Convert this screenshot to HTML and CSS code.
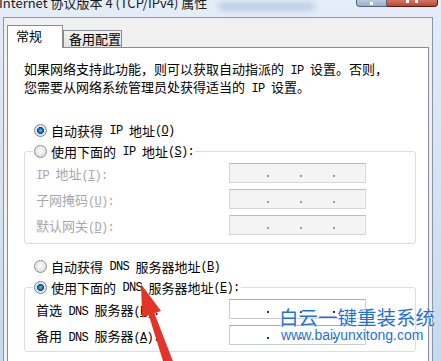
FILE: index.html
```html
<!DOCTYPE html>
<html lang="zh-CN">
<head>
  <meta charset="UTF-8">
  <title>Internet 协议版本 4 (TCP/IPv4) 属性</title>
  <link rel="stylesheet" href="styles.css">
</head>
<body>
<div class="window">
  <div class="titlebar">
    <span class="title">Internet 协议版本 4 (TCP/IPv4) 属性</span>
    <span class="title-blur"></span>
    <div class="caption">
      <span class="btn-help"></span>
      <span class="btn-close"></span>
    </div>
  </div>

  <div class="client">
    <div class="tabs">
      <div class="tab active">常规</div>
      <div class="tab">备用配置</div>
    </div>

    <div class="panel">
      <p class="intro">如果网络支持此功能，则可以获取自动指派的<span class="en"> IP </span>设置。否则，<br>您需要从网络系统管理员处获得适当的<span class="en"> IP </span>设置。</p>

      <label class="opt first">
        <span class="radio checked"></span>自动获得<span class="en"> IP </span>地址<span class="en">(<u>O</u>)</span>
      </label>
      <fieldset class="group">
        <legend class="opt"><span class="radio"></span>使用下面的<span class="en"> IP </span>地址<span class="en">(<u>S</u>):</span></legend>
        <div class="row off">
          <span class="lbl"><span class="en">IP </span>地址<span class="en">(<u>I</u>):</span></span>
          <span class="field"><i></i><i></i><i></i></span>
        </div>
        <div class="row off">
          <span class="lbl">子网掩码<span class="en">(<u>U</u>):</span></span>
          <span class="field"><i></i><i></i><i></i></span>
        </div>
        <div class="row off">
          <span class="lbl">默认网关<span class="en">(<u>D</u>):</span></span>
          <span class="field"><i></i><i></i><i></i></span>
        </div>
      </fieldset>

      <label class="opt dns">
        <span class="radio"></span>自动获得<span class="en"> DNS </span>服务器地址<span class="en">(<u>B</u>)</span>
      </label>
      <fieldset class="group dns-group">
        <legend class="opt"><span class="radio checked"></span>使用下面的<span class="en"> DNS </span>服务器地址<span class="en">(<u>E</u>):</span></legend>
        <div class="row">
          <span class="lbl">首选<span class="en"> DNS </span>服务器<span class="en">(<u>P</u>):</span></span>
          <span class="field"><i></i><i></i><i></i></span>
        </div>
        <div class="row">
          <span class="lbl">备用<span class="en"> DNS </span>服务器<span class="en">(<u>A</u>):</span></span>
          <span class="field"><i></i><i></i><i></i></span>
        </div>
      </fieldset>
    </div>
  </div>
</div>

<div class="watermark">
  <div class="wm-name">白云一键重装系统</div>
  <div class="wm-url">www.baiyunxitong.com</div>
</div>

<svg class="arrow" width="441" height="361" viewBox="0 0 441 361">
  <polygon points="141,284 161,311 154.4,313.2 175.7,368.3 166.3,371.7 148.8,315.2 142.2,317.5" fill="#e3342a"/>
</svg>
</body>
</html>
```

FILE: styles.css
```css
body {
  margin: 0;
  width: 441px;
  height: 361px;
  overflow: hidden;
  position: relative;
  background: linear-gradient(#e4edf8, #c7d9ee);
  font-family: "Noto Sans CJK SC", sans-serif;
  font-size: 13px;
  color: #000;
}
.en {
  font-family: "Liberation Mono", monospace;
  font-size: 12px;
  letter-spacing: -0.7px;
  white-space: pre;
}
.window {
  display: flex;
  flex-direction: column;
  height: 100%;
}

/* title bar */
.titlebar {
  height: 17px;
  flex-shrink: 0;
  display: flex;
  align-items: flex-start;
}
.title {
  margin: -5px 0 0 -1px;
  line-height: 16px;
  white-space: nowrap;
  color: #1b1b1b;
}
.title-blur {
  width: 95px;
  height: 7px;
  margin: 3px 0 0 12px;
  background: #a8c0de;
  filter: blur(3px);
  opacity: .8;
}
.caption {
  margin-left: auto;
  margin-right: 3px;
  display: flex;
}
.btn-help, .btn-close {
  height: 7px;
  box-sizing: border-box;
  border: 1px solid #56657a;
  border-top: none;
  position: relative;
}
.btn-help {
  width: 31px;
  border-radius: 0 0 0 4px;
  background: linear-gradient(#b9c9dd, #9bb0c9);
}
.btn-close {
  width: 51px;
  border-color: #4e1f17;
  border-left: none;
  border-radius: 0 0 4px 0;
  background: linear-gradient(#d47563, #c2432f);
}
.btn-help::after {
  content: "";
  position: absolute;
  left: 13px;
  top: 2px;
  width: 3px;
  height: 3px;
  background: #fff;
}
.btn-close::after {
  content: "";
  position: absolute;
  left: 19px;
  top: 0;
  width: 12px;
  height: 3px;
  border-left: 3px solid #fff;
  border-right: 3px solid #fff;
  box-sizing: border-box;
}

/* dialog client area */
.client {
  flex: 1;
  min-height: 0;
  margin: 0 8px 0 3px;
  border: 1px solid #8796a9;
  border-bottom: none;
  background: #f0f0f0;
  padding: 7px 3px 0;
  display: flex;
  flex-direction: column;
}
.tabs {
  display: flex;
  align-items: flex-end;
  height: 22px;
  position: relative;
  z-index: 1;
}
.tab {
  width: 59px;
  height: 17px;
  box-sizing: border-box;
  border: 1px solid #898c95;
  border-bottom: none;
  background: linear-gradient(#f4f4f4, #e2e2e2);
  padding-left: 5px;
  line-height: 15px;
  white-space: nowrap;
}
.tab.active {
  width: 56px;
  height: 23px;
  margin-bottom: -1px;
  background: #fff;
  padding: 2px 0 0 8px;
  line-height: 16px;
}
.panel {
  flex: 1;
  background: #fff;
  border: 1px solid #898c95;
  border-bottom: none;
  padding: 13px 12px 0 16px;
}
.intro {
  margin: 0;
  height: 30px;
  line-height: 15px;
  white-space: nowrap;
}

/* radio options and group boxes */
.opt {
  display: flex;
  align-items: center;
  height: 21px;
  white-space: nowrap;
}
.opt.first {
  margin: 29px 0 0 10px;
}
.opt.dns {
  margin: 12px 0 0 10px;
}
.radio {
  width: 13px;
  height: 13px;
  box-sizing: border-box;
  border-radius: 50%;
  border: 1px solid #8f8f8f;
  background: radial-gradient(circle at 50% 40%, #fdfdfd 0, #e6e6e6 55%, #cfcfcf 100%);
  margin-right: 4px;
  flex-shrink: 0;
}
.radio.checked {
  border-color: #7d8590;
  background: radial-gradient(circle at 50% 50%, #5cc0f4 0, #1f79c3 25%, #0d3f70 42%, #e8e8e8 48%, #dcdcdc 100%);
}
.group {
  margin: 0;
  min-width: 0;
  border: 1px solid #d5dfe5;
  border-radius: 3px;
  padding: 0 0 8px 8px;
}
.group legend {
  padding: 0 1px;
}
.dns-group {
  padding-bottom: 6px;
}
.row {
  display: flex;
  align-items: center;
  height: 20px;
  margin: 6px 0 0 3px;
}
legend + .row {
  margin-top: 1px;
}
.lbl {
  width: 193px;
  white-space: nowrap;
}
.field {
  width: 137px;
  height: 20px;
  box-sizing: border-box;
  border: 1px solid #c9ced4;
  border-top-color: #abadb3;
  background: #fff;
  display: flex;
  align-items: center;
  gap: 31px;
  padding: 6px 0 0 37px;
}
.field i {
  width: 2px;
  height: 2px;
  background: #333;
}
.row.off .lbl {
  color: #a8a8a8;
}
.row.off .field {
  background: #f4f4f4;
  border-color: #d6d6d6;
  border-top-color: #bdbdbd;
}
.row.off .field i {
  background: #9c9c9c;
}

/* overlays */
.watermark {
  position: absolute;
  left: 279px;
  top: 307px;
  color: #1f6fde;
  text-shadow: 0 0 2px #fff, 0 0 2px #fff;
}
.wm-name {
  font-size: 19.5px;
  line-height: 20px;
  white-space: nowrap;
}
.wm-url {
  margin: 1px 0 0 2px;
  font-family: "Liberation Sans", sans-serif;
  font-size: 14px;
  line-height: 14px;
}
.arrow {
  position: absolute;
  left: 0;
  top: 0;
}
```
